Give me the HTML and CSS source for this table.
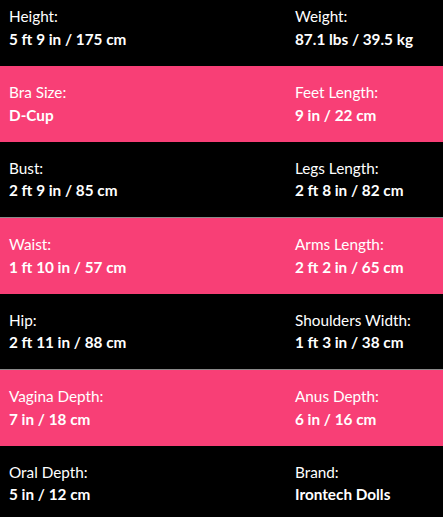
FILE: index.html
```html
<!DOCTYPE html>
<html>
<head>
<meta charset="utf-8">
<link rel="stylesheet" href="styles.css">
</head>
<body>
<div class="specs">
  <div class="row dark first">
    <div class="cell"><div class="label">Height:</div><div class="value">5 ft 9 in / 175 cm</div></div>
    <div class="cell"><div class="label">Weight:</div><div class="value">87.1 lbs / 39.5 kg</div></div>
  </div>
  <div class="row pink">
    <div class="cell"><div class="label">Bra Size:</div><div class="value">D-Cup</div></div>
    <div class="cell"><div class="label">Feet Length:</div><div class="value">9 in / 22 cm</div></div>
  </div>
  <div class="row dark lined">
    <div class="cell"><div class="label">Bust:</div><div class="value">2 ft 9 in / 85 cm</div></div>
    <div class="cell"><div class="label">Legs Length:</div><div class="value">2 ft 8 in / 82 cm</div></div>
  </div>
  <div class="row pink">
    <div class="cell"><div class="label">Waist:</div><div class="value">1 ft 10 in / 57 cm</div></div>
    <div class="cell"><div class="label">Arms Length:</div><div class="value">2 ft 2 in / 65 cm</div></div>
  </div>
  <div class="row dark lined">
    <div class="cell"><div class="label">Hip:</div><div class="value">2 ft 11 in / 88 cm</div></div>
    <div class="cell"><div class="label">Shoulders Width:</div><div class="value">1 ft 3 in / 38 cm</div></div>
  </div>
  <div class="row pink">
    <div class="cell"><div class="label">Vagina Depth:</div><div class="value">7 in / 18 cm</div></div>
    <div class="cell"><div class="label">Anus Depth:</div><div class="value">6 in / 16 cm</div></div>
  </div>
  <div class="row dark">
    <div class="cell"><div class="label">Oral Depth:</div><div class="value">5 in / 12 cm</div></div>
    <div class="cell"><div class="label">Brand:</div><div class="value">Irontech Dolls</div></div>
  </div>
</div>
</body>
</html>
```
FILE: styles.css
```css
html, body {
  margin: 0;
  padding: 0;
  background: #000;
}
body {
  font-family: Lato, "Open Sans", sans-serif;
  color: #fff;
  font-size: 15.3px;
  line-height: 22.5px;
}
.specs {
  display: flex;
  flex-direction: column;
}
.row {
  display: grid;
  grid-template-columns: 286px 1fr;
  padding: 15px 9px 15.5px;
}
.row.first {
  padding-top: 5px;
  padding-bottom: 16px;
}
.dark {
  background: #000;
}
.pink {
  background: #f83f76;
}
.lined {
  border-bottom: 1px solid #8a8a8a;
}
.label {
  font-weight: 400;
}
.value {
  font-weight: 700;
}
```
